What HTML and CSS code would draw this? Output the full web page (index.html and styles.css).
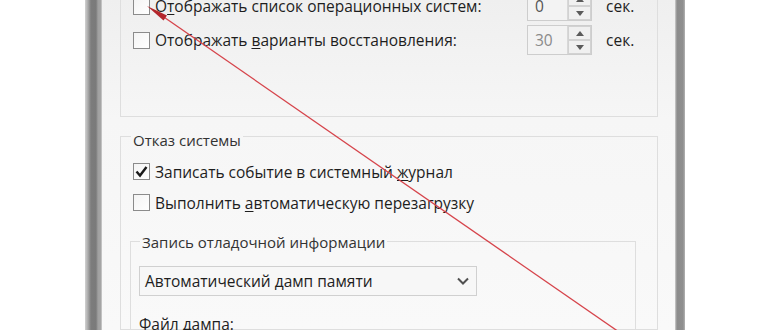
FILE: index.html
```html
<!DOCTYPE html>
<html lang="ru">
  <head>
    <meta charset="UTF-8" />
    <title>Загрузка и восстановление</title>
    <link rel="stylesheet" href="styles.css">
  </head>
  <body>
    <div class="window">
      <div class="frame-left"></div>

      <div class="content">
        <!-- Boot options -->
        <div class="group group-boot">
          <div class="row">
            <label class="check">
              <span class="box"></span>
              <span>О<u>т</u>ображать список операционных систем:</span>
            </label>
            <div class="spin">
              <span class="spin-value">0</span>
              <span class="spin-btns">
                <span class="spin-btn">
                  <svg width="8" height="5" viewBox="0 0 8 5"><path d="M0 5 L4 0 L8 5 Z" fill="#5a5a5a"/></svg>
                </span>
                <span class="spin-btn">
                  <svg width="8" height="5" viewBox="0 0 8 5"><path d="M0 0 L4 5 L8 0 Z" fill="#5a5a5a"/></svg>
                </span>
              </span>
            </div>
            <span class="unit">сек.</span>
          </div>

          <div class="row">
            <label class="check">
              <span class="box"></span>
              <span>Отображать <u>в</u>арианты восстановления:</span>
            </label>
            <div class="spin">
              <span class="spin-value spin-disabled">30</span>
              <span class="spin-btns">
                <span class="spin-btn">
                  <svg width="8" height="5" viewBox="0 0 8 5"><path d="M0 5 L4 0 L8 5 Z" fill="#5a5a5a"/></svg>
                </span>
                <span class="spin-btn">
                  <svg width="8" height="5" viewBox="0 0 8 5"><path d="M0 0 L4 5 L8 0 Z" fill="#5a5a5a"/></svg>
                </span>
              </span>
            </div>
            <span class="unit">сек.</span>
          </div>
        </div>

        <!-- System failure -->
        <fieldset class="group group-fail">
          <legend class="legend-main">Отказ системы</legend>

          <div class="row row-short">
            <label class="check">
              <span class="box">
                <svg width="15" height="15" viewBox="0 0 15 15"><path d="M2.5 7.5 L6 11.5 L12.5 3" fill="none" stroke="#1a1a1a" stroke-width="2.4"/></svg>
              </span>
              <span>Записать событие в системный <u>ж</u>урнал</span>
            </label>
          </div>

          <div class="row row-short">
            <label class="check">
              <span class="box"></span>
              <span>Выполнить <u>а</u>втоматическую перезагрузку</span>
            </label>
          </div>

          <fieldset class="group group-debug">
            <legend class="legend-sub">Запись отладочной информации</legend>
            <div class="select">
              <span>Автоматический дамп памяти</span>
              <svg width="12" height="8" viewBox="0 0 12 8"><path d="M1 1.5 L6 6.5 L11 1.5" fill="none" stroke="#505050" stroke-width="2"/></svg>
            </div>
            <div class="field-label">Файл дампа:</div>
          </fieldset>
        </fieldset>
      </div>

      <div class="frame-right"></div>
    </div>

    <!-- red annotation arrow -->
    <svg class="arrow" width="770" height="330" viewBox="0 0 770 330">
      <line x1="158" y1="13" x2="619" y2="332" stroke="#d6444b" stroke-width="1.3"/>
      <path d="M147 6 L167 15.5 L163.5 20.5 Z" fill="#b3262c"/>
    </svg>
  </body>
</html>
```

FILE: styles.css
```css
body {
  margin: 0;
  width: 770px;
  height: 330px;
  overflow: hidden;
  position: relative;
  background: #ffffff;
  font-family: "Open Sans", "Noto Sans", sans-serif;
  font-size: 15.5px;
  color: #1e1e1e;
}

.window {
  display: flex;
  margin-left: 85px;
  width: 600px;
  height: 330px;
}

.frame-left {
  width: 17px;
  background: linear-gradient(
    to right,
    #d2d2d2 0,
    #a9a9a9 3px,
    #7c7c7c 6px,
    #7a7a7a 11px,
    #a0a0a0 13px,
    #a6a6a6 16px,
    #dedede 17px
  );
}

.frame-right {
  width: 10px;
  background: linear-gradient(
    to right,
    #cfcfcf 0,
    #8c8c8c 2px,
    #8f8f8f 8px,
    #b4b4b4 10px
  );
}

.content {
  flex: 1;
  overflow: hidden;
  padding: 0 17px 0 18px;
  background: linear-gradient(#efefef, #f6f6f6 120px, #f9f9f9);
}

.group {
  border: 1px solid #dedede;
  margin: 0;
}

.group-boot {
  margin-top: -46px;
  padding: 34px 0 59px 12px;
}

.row {
  display: grid;
  grid-template-columns: 394px 65px auto;
  align-items: center;
  height: 34px;
}

.row-short {
  height: 31px;
}

.check {
  display: flex;
  align-items: center;
  gap: 5px;
  white-space: nowrap;
}

.box {
  width: 15px;
  height: 15px;
  border: 1px solid #8b8b8b;
  background: linear-gradient(135deg, #f4f4f4, #ffffff);
  display: flex;
  align-items: center;
  justify-content: center;
}

u {
  text-decoration-thickness: 1px;
  text-underline-offset: 2px;
}

.spin {
  display: flex;
  height: 30px;
  box-sizing: border-box;
  border: 1px solid #cdcdcd;
  background: #f3f3f3;
}

.spin-value {
  flex: 1;
  padding-left: 7px;
  line-height: 28px;
  color: #555555;
}

.spin-disabled {
  color: #8a8a8a;
}

.spin-btns {
  width: 23px;
  display: flex;
  flex-direction: column;
  border-left: 1px solid #d8d8d8;
}

.spin-btn {
  flex: 1;
  display: flex;
  align-items: center;
  justify-content: center;
  border: 1px solid #d2d2d2;
  background: #f0f0f0;
}

.unit {
  margin-left: 14px;
}

.group-fail {
  margin-top: 5px;
  padding: 6px 0 0 12px;
  height: 200px;
}

.legend-main {
  margin-left: -2px;
  padding: 8px 2px 0;
  line-height: 20px;
  font-size: 15px;
  color: #333333;
}

.group-debug {
  margin: 12px 21px 0 -3px;
  padding: 0 0 0 8px;
  height: 120px;
}

.legend-sub {
  margin-left: 1px;
  padding: 2px 2px 0;
  line-height: 20px;
  font-size: 15px;
  color: #333333;
}

.select {
  display: flex;
  align-items: center;
  justify-content: space-between;
  width: 338px;
  height: 30px;
  box-sizing: border-box;
  margin-top: 14px;
  padding: 0 7px 0 5px;
  border: 1px solid #d0d0d0;
  background: #f7f7f7;
}

.field-label {
  margin-top: 18px;
  line-height: 20px;
}

.arrow {
  position: absolute;
  left: 0;
  top: 0;
  pointer-events: none;
}
```
